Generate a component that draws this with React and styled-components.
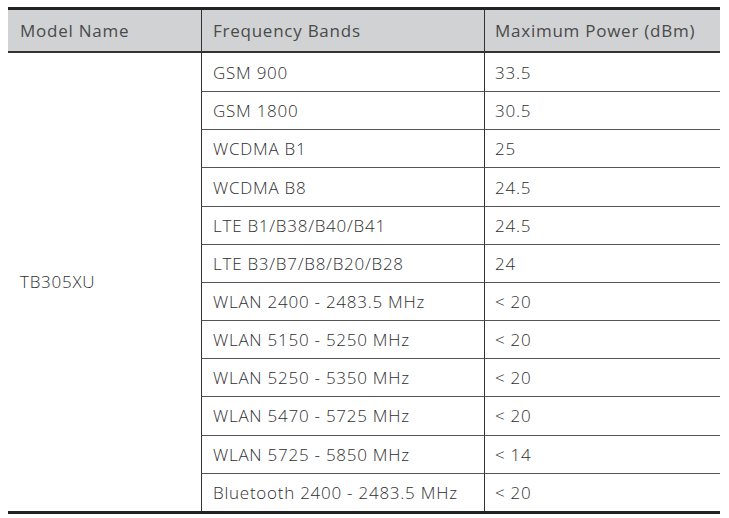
import React from "react";
import styled, { createGlobalStyle } from "styled-components";

const Global = createGlobalStyle`
  html, body { margin: 0; padding: 0; background: #ffffff; }
  body { padding: 7px 0 0 8px; }
`;

const Table = styled.table`
  width: 712px;
  border-collapse: separate;
  border-spacing: 0;
  table-layout: fixed;
  font-family: "Open Sans", "Liberation Sans", sans-serif;
  letter-spacing: 0.75px;
  border-top: 3px solid #222222;
  border-bottom: 3px solid #222222;
`;

const HeadCell = styled.th`
  background: #d1d2d4;
  color: #4a4a4a;
  font-weight: 500;
  font-size: 17px;
  text-align: left;
  height: 43px;
  padding: 0 0 0 ${(p) => p.$pad}px;
  border-bottom: 2px solid #333333;
  border-left: ${(p) => (p.$first ? "none" : "1.5px solid #333333")};
  box-sizing: border-box;
`;

const Cell = styled.td`
  color: #2f2f2f;
  font-weight: 300;
  font-size: 17px;
  height: 38.17px;
  padding: 0 0 0 ${(p) => p.$pad}px;
  border-left: ${(p) => (p.$first ? "none" : "1.5px solid #333333")};
  border-top: ${(p) => (p.$top ? "1px solid #555555" : "none")};
  box-sizing: border-box;
  vertical-align: middle;
`;

const rows = [
  ["GSM 900", "33.5"],
  ["GSM 1800", "30.5"],
  ["WCDMA B1", "25"],
  ["WCDMA B8", "24.5"],
  ["LTE B1/B38/B40/B41", "24.5"],
  ["LTE B3/B7/B8/B20/B28", "24"],
  ["WLAN 2400 - 2483.5 MHz", "< 20"],
  ["WLAN 5150 - 5250 MHz", "< 20"],
  ["WLAN 5250 - 5350 MHz", "< 20"],
  ["WLAN 5470 - 5725 MHz", "< 20"],
  ["WLAN 5725 - 5850 MHz", "< 14"],
  ["Bluetooth 2400 - 2483.5 MHz", "< 20"],
];

export default function App() {
  return (
    <>
      <Global />
      <Table>
        <colgroup>
          <col style={{ width: 193 }} />
          <col style={{ width: 283 }} />
          <col style={{ width: 236 }} />
        </colgroup>
        <thead>
          <tr>
            <HeadCell $first $pad={12}>Model Name</HeadCell>
            <HeadCell $pad={11}>Frequency Bands</HeadCell>
            <HeadCell $pad={10}>Maximum Power (dBm)</HeadCell>
          </tr>
        </thead>
        <tbody>
          {rows.map((r, i) => (
            <tr key={i}>
              {i === 0 && (
                <Cell $first $pad={12} rowSpan={rows.length}>
                  TB305XU
                </Cell>
              )}
              <Cell $pad={11} $top={i > 0}>{r[0]}</Cell>
              <Cell $pad={10} $top={i > 0}>{r[1]}</Cell>
            </tr>
          ))}
        </tbody>
      </Table>
    </>
  );
}
